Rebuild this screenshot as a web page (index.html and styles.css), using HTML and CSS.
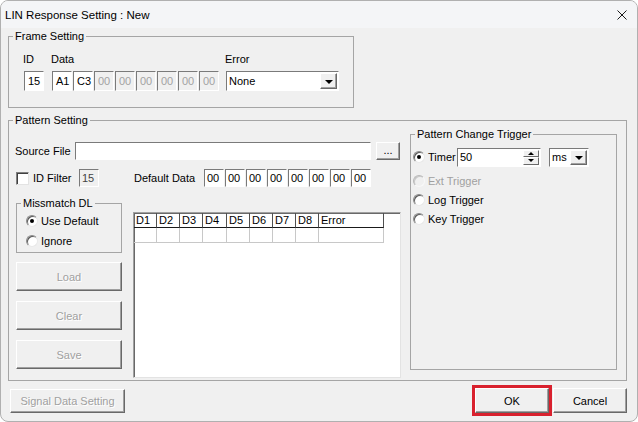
FILE: index.html
```html
<!DOCTYPE html>
<html lang="en">
<head>
    <meta charset="UTF-8">
    <title>LIN Response Setting : New</title>
    <link rel="stylesheet" href="styles.css">
</head>
<body>
    <div class="window">
        <div class="titlebar">
            <span class="title">LIN Response Setting : New</span>
            <svg class="close" width="10" height="10" viewBox="0 0 10 10">
                <path d="M0.5 0.5L9.5 9.5M9.5 0.5L0.5 9.5" stroke="#1a1a1a" stroke-width="1" fill="none"/>
            </svg>
        </div>

        <div class="client">
            <fieldset class="group frame">
                <legend>Frame Setting</legend>
                <div class="frame-body">
                    <div class="field">
                        <span class="cap">ID</span>
                        <div class="edit">15</div>
                    </div>
                    <div class="field">
                        <span class="cap">Data</span>
                        <div class="bytes">
                            <div class="edit">A1</div>
                            <div class="edit">C3</div>
                            <div class="edit off">00</div>
                            <div class="edit off">00</div>
                            <div class="edit off">00</div>
                            <div class="edit off">00</div>
                            <div class="edit off">00</div>
                            <div class="edit off">00</div>
                        </div>
                    </div>
                    <div class="field">
                        <span class="cap">Error</span>
                        <div class="combo error-combo">
                            <span class="combo-text">None</span>
                            <span class="drop"></span>
                        </div>
                    </div>
                </div>
            </fieldset>

            <fieldset class="group pattern">
                <legend>Pattern Setting</legend>
                <div class="pattern-body">
                    <div class="pattern-left">
                        <div class="row source-row">
                            <span class="source-label">Source File</span>
                            <div class="edit source-edit"></div>
                            <button class="btn browse">...</button>
                        </div>

                        <div class="row filter-row">
                            <span class="check"></span>
                            <span class="filter-label">ID Filter</span>
                            <div class="edit small off dark">15</div>
                            <span class="default-label">Default Data</span>
                            <div class="bytes">
                                <div class="edit small">00</div>
                                <div class="edit small">00</div>
                                <div class="edit small">00</div>
                                <div class="edit small">00</div>
                                <div class="edit small">00</div>
                                <div class="edit small">00</div>
                                <div class="edit small">00</div>
                                <div class="edit small">00</div>
                            </div>
                        </div>

                        <div class="lower">
                            <div class="side">
                                <fieldset class="group mismatch">
                                    <legend>Missmatch DL</legend>
                                    <div class="mismatch-body">
                                        <div class="opt"><span class="radio on"></span>Use Default</div>
                                        <div class="opt"><span class="radio"></span>Ignore</div>
                                    </div>
                                </fieldset>
                                <button class="btn side-btn off">Load</button>
                                <button class="btn side-btn off">Clear</button>
                                <button class="btn side-btn off">Save</button>
                            </div>

                            <div class="grid-box">
                                <div class="grid">
                                    <div class="hd">D1</div>
                                    <div class="hd">D2</div>
                                    <div class="hd">D3</div>
                                    <div class="hd">D4</div>
                                    <div class="hd">D5</div>
                                    <div class="hd">D6</div>
                                    <div class="hd">D7</div>
                                    <div class="hd">D8</div>
                                    <div class="hd">Error</div>
                                    <div class="cell"></div>
                                    <div class="cell"></div>
                                    <div class="cell"></div>
                                    <div class="cell"></div>
                                    <div class="cell"></div>
                                    <div class="cell"></div>
                                    <div class="cell"></div>
                                    <div class="cell"></div>
                                    <div class="cell"></div>
                                </div>
                            </div>
                        </div>
                    </div>

                    <fieldset class="group trigger">
                        <legend>Pattern Change Trigger</legend>
                        <div class="trigger-body">
                            <div class="timer-row">
                                <div class="opt timer-opt"><span class="radio on"></span>Timer</div>
                                <div class="edit spin-edit">
                                    <span class="spin-text">50</span>
                                    <span class="spin">
                                        <span class="spin-btn up"></span>
                                        <span class="spin-btn down"></span>
                                    </span>
                                </div>
                                <div class="combo unit-combo">
                                    <span class="combo-text">ms</span>
                                    <span class="drop"></span>
                                </div>
                            </div>
                            <div class="opt trig off"><span class="radio off"></span>Ext Trigger</div>
                            <div class="opt trig"><span class="radio"></span>Log Trigger</div>
                            <div class="opt trig"><span class="radio"></span>Key Trigger</div>
                        </div>
                    </fieldset>
                </div>
            </fieldset>

            <div class="footer">
                <button class="btn signal off">Signal Data Setting</button>
                <div class="actions">
                    <button class="btn action ok">OK</button>
                    <button class="btn action">Cancel</button>
                </div>
            </div>
        </div>
    </div>
</body>
</html>
```

FILE: styles.css
```css
body {
    margin: 0;
    background: #ffffff;
    font-family: "Liberation Sans", Arial, sans-serif;
    font-size: 11px;
    color: #000000;
}

.window {
    width: 638px;
    height: 422px;
    box-sizing: border-box;
    border: 1px solid #b0b0b0;
    border-radius: 8px;
    background: #f0f0f0;
    overflow: hidden;
}

.titlebar {
    height: 27px;
    display: flex;
    align-items: center;
    justify-content: space-between;
    padding: 0 10px 0 4px;
    background: #f4f5f7;
    font-size: 11.5px;
}

.client {
    padding: 1px 10px 0 7px;
}

/* group boxes */
.group {
    margin: 0;
    padding: 0;
    border: 1px solid #a5a5a5;
    min-width: 0;
    box-sizing: border-box;
}

.group legend {
    padding: 0 2px;
    margin-left: 4px;
    line-height: 14px;
}

.frame {
    width: 346px;
}

.frame-body {
    display: flex;
    gap: 8px;
    padding: 9px 0 16px 15px;
}

.frame-body .field:nth-child(3) {
    margin-left: -1px;
}

.field {
    display: flex;
    flex-direction: column;
    gap: 5px;
}

.cap {
    line-height: 14px;
    margin-left: -1px;
}

.bytes {
    display: flex;
    gap: 1px;
}

/* edit boxes */
.edit {
    width: 20px;
    height: 20px;
    box-sizing: border-box;
    background: #ffffff;
    border: 1px solid;
    border-color: #7a7a7a #ffffff #ffffff #7a7a7a;
    padding-left: 3px;
    line-height: 18px;
    white-space: nowrap;
}

.edit.small {
    height: 18px;
    line-height: 16px;
    padding-left: 2px;
}

.edit.off {
    background: #f0f0f0;
    color: #a3a3a3;
}

.edit.dark {
    color: #444444;
}

/* combo boxes */
.combo {
    display: flex;
    align-items: stretch;
    height: 20px;
    box-sizing: border-box;
    background: #ffffff;
    border: 1px solid;
    border-color: #7a7a7a #ffffff #ffffff #7a7a7a;
    padding: 1px;
}

.combo-text {
    flex: 1;
    padding-left: 1px;
    line-height: 16px;
}

.error-combo {
    width: 113px;
}

.unit-combo {
    width: 40px;
    height: 19px;
}

.unit-combo .combo-text {
    line-height: 15px;
}

.drop {
    width: 17px;
    box-sizing: border-box;
    background: #f0f0f0;
    border: 1px solid;
    border-color: #ffffff #696969 #696969 #ffffff;
    box-shadow: inset -1px -1px #a0a0a0;
    display: flex;
    align-items: center;
    justify-content: center;
}

.drop::after {
    content: "";
    border-left: 4px solid transparent;
    border-right: 4px solid transparent;
    border-top: 4px solid #000000;
    margin-top: 1px;
}

/* buttons */
.btn {
    box-sizing: border-box;
    margin: 0;
    padding: 0;
    background: #f0f0f0;
    border: 1px solid;
    border-color: #ffffff #696969 #696969 #ffffff;
    box-shadow: inset -1px -1px #a0a0a0;
    font: inherit;
    color: #000000;
    display: flex;
    align-items: center;
    justify-content: center;
}

.btn.off {
    color: #a0a0a0;
    text-shadow: 1px 1px #ffffff;
}

/* pattern setting */
.pattern {
    width: 619px;
    margin-top: 5px;
}

.pattern-body {
    display: flex;
    gap: 9px;
    padding: 0 0 2px 6px;
}

.pattern-left {
    width: 386px;
}

.row {
    display: flex;
    align-items: center;
}

.source-row {
    margin-top: 15px;
    height: 18px;
}

.source-label {
    width: 60px;
}

.source-edit {
    width: 296px;
    height: 18px;
}

.browse {
    width: 24px;
    height: 18px;
    margin-left: 5px;
    padding-bottom: 3px;
}

.filter-row {
    margin-top: 9px;
    height: 18px;
}

.check {
    width: 13px;
    height: 13px;
    box-sizing: border-box;
    margin-left: 1px;
    background: #ffffff;
    border: 1px solid;
    border-color: #808080 #e3e3e3 #e3e3e3 #808080;
    box-shadow: inset 1px 1px #404040;
}

.filter-label {
    width: 46px;
    margin-left: 4px;
}

.default-label {
    width: 70px;
    margin-left: 35px;
}

.lower {
    display: flex;
    gap: 11px;
    margin-top: 9px;
}

.side {
    width: 106px;
    margin-left: 1px;
    display: flex;
    flex-direction: column;
}

.mismatch {
    width: 106px;
}

.mismatch-body {
    padding: 1px 0 1px 9px;
}

.opt {
    display: flex;
    align-items: center;
    gap: 3px;
    height: 20px;
}

.radio {
    width: 12px;
    height: 12px;
    box-sizing: border-box;
    border-radius: 50%;
    background: #ffffff;
    border: 1px solid;
    border-color: #8a8a8a #e8e8e8 #e8e8e8 #8a8a8a;
    box-shadow: inset 1px 1px #5a5a5a;
    display: flex;
    align-items: center;
    justify-content: center;
    flex: none;
}

.radio.on::after {
    content: "";
    width: 4px;
    height: 4px;
    border-radius: 50%;
    background: #000000;
}

.radio.off {
    background: #f0f0f0;
    border-color: #b8b8b8 #f8f8f8 #f8f8f8 #b8b8b8;
    box-shadow: inset 1px 1px #c8c8c8;
}

.opt.off {
    color: #a0a0a0;
}

.side-btn {
    width: 106px;
    height: 29px;
    margin-top: 10px;
}

.side-btn:nth-of-type(1) {
    margin-top: 9px;
}

/* data grid */
.grid-box {
    width: 268px;
    height: 166px;
    margin-top: 16px;
    box-sizing: border-box;
    background: #ffffff;
    border: 1px solid;
    border-color: #a0a0a0 #e3e3e3 #e3e3e3 #a0a0a0;
    box-shadow: inset 1px 1px #696969;
}

.grid {
    display: grid;
    grid-template-columns: 23px 23px 23px 24px 23px 23px 23px 23px 65px;
    width: 250px;
}

.hd {
    height: 15px;
    box-sizing: border-box;
    border-right: 1px solid #505050;
    border-bottom: 1px solid #1a1a1a;
    padding-left: 2px;
    line-height: 14px;
}

.cell {
    height: 15px;
    box-sizing: border-box;
    border-right: 1px solid #c8c8c8;
    border-bottom: 1px solid #c8c8c8;
}

/* trigger group */
.trigger {
    width: 207px;
    height: 243px;
}

.trigger-body {
    padding: 6px 0 0 2px;
}

.timer-row {
    display: flex;
    align-items: center;
    height: 20px;
    margin-bottom: 4px;
}

.timer-opt {
    width: 44px;
}

.spin-edit {
    width: 84px;
    height: 19px;
    display: flex;
    padding: 1px 1px 1px 2px;
    line-height: 15px;
}

.spin-text {
    flex: 1;
}

.spin {
    width: 16px;
    display: flex;
    flex-direction: column;
}

.spin-btn {
    flex: 1;
    box-sizing: border-box;
    background: #f0f0f0;
    border: 1px solid;
    border-color: #ffffff #696969 #696969 #ffffff;
    display: flex;
    align-items: center;
    justify-content: center;
}

.spin-btn.up::after {
    content: "";
    border-left: 3px solid transparent;
    border-right: 3px solid transparent;
    border-bottom: 3px solid #000000;
}

.spin-btn.down::after {
    content: "";
    border-left: 3px solid transparent;
    border-right: 3px solid transparent;
    border-top: 3px solid #000000;
}

.unit-combo {
    margin-left: 8px;
}

.trig {
    height: 19px;
}

/* footer buttons */
.footer {
    display: flex;
    justify-content: space-between;
    margin-top: 7px;
    width: 619px;
}

.signal {
    width: 115px;
    height: 24px;
    margin: 1px 0 0 2px;
}

.actions {
    display: flex;
    gap: 4px;
}

.action {
    width: 74px;
    height: 25px;
}

.ok {
    outline: 3px solid #d9212e;
}
```
